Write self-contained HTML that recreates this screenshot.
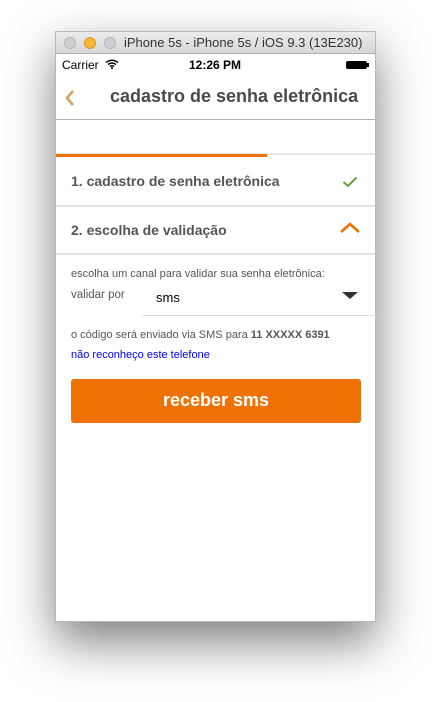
<!DOCTYPE html>
<html><head><meta charset="utf-8"><style>
*{margin:0;padding:0;box-sizing:border-box}
body{width:432px;height:702px;background:#fff;position:relative;font-family:"Liberation Sans",Arial,sans-serif;overflow:hidden}
.win{position:absolute;left:55px;top:31px;width:321px;height:591px;background:#fff;box-shadow:0 20px 45px rgba(0,0,0,.5);border:1px solid #b8b8b8}
.tb{position:absolute;left:0;top:0;width:100%;height:22px;background:linear-gradient(#ececec,#d6d6d6);border-bottom:1px solid #b0b0b0}
.dot{position:absolute;top:5px;width:12px;height:12px;border-radius:50%;background:#d0d0d0;border:1px solid #b5b5b5}
.t{position:absolute;white-space:nowrap}
.a{position:absolute}
</style></head><body>
<div class="win">
<div class="tb">
<div class="dot" style="left:8px"></div>
<div class="dot" style="left:28px;background:#f6b53a;border-color:#dc9a2a"></div>
<div class="dot" style="left:48px"></div>
<div class="t" style="left:68px;top:3px;font-size:13px;color:#333">iPhone 5s - iPhone 5s / iOS 9.3 (13E230)</div>
</div>
<div class="t" style="left:6px;top:26px;font-size:12px;color:#000">Carrier</div>
<svg class="a" style="left:49px;top:27px" width="14" height="10" viewBox="0 0 14 10"><path d="M1 3.5Q7 -1 13 3.5M3 5.5Q7 2.5 11 5.5M5 7.5Q7 6 9 7.5" stroke="#000" stroke-width="1.5" fill="none"/><circle cx="7" cy="9" r="1" fill="#000"/></svg>
<div class="t" style="left:133px;top:26px;font-size:12px;font-weight:bold;color:#000">12:26 PM</div>
<div class="a" style="left:290px;top:29px;width:21px;height:8px;background:#000;border-radius:2px"></div>
<div class="a" style="left:311px;top:31px;width:2px;height:4px;background:#000"></div>
<svg class="a" style="left:8px;top:57px" width="12" height="18" viewBox="0 0 12 18"><path d="M9 2L3 9L9 16" stroke="#d4a560" stroke-width="2.6" fill="none"/></svg>
<div class="t" style="left:54px;top:54px;font-size:18px;font-weight:bold;color:#4a4a4a">cadastro de senha eletrônica</div>
<div class="a" style="left:0;top:87px;width:100%;height:1px;background:#b0b0b0"></div>
<div class="a" style="left:0;top:121px;width:100%;height:2px;background:#e6e6e6"></div>
<div class="a" style="left:0;top:122px;width:211px;height:3px;background:#ee7203"></div>
<div class="t" style="left:15px;top:141px;font-size:14px;font-weight:bold;color:#555">1. cadastro de senha eletrônica</div>
<svg class="a" style="left:286px;top:144px" width="16" height="12" viewBox="0 0 16 12"><path d="M1.5 6L6 10L14.5 1.5" stroke="#6a9f3e" stroke-width="2" fill="none"/></svg>
<div class="a" style="left:0;top:173px;width:100%;height:2px;background:#e3e3e3"></div>
<div class="t" style="left:15px;top:190px;font-size:14px;font-weight:bold;color:#555">2. escolha de validação</div>
<svg class="a" style="left:283px;top:189px" width="22" height="14" viewBox="0 0 22 14"><path d="M2 11L11 3L20 11" stroke="#ee7203" stroke-width="2.6" fill="none"/></svg>
<div class="a" style="left:0;top:221px;width:100%;height:2px;background:#e3e3e3"></div>
<div class="t" style="left:15px;top:236px;font-size:11px;color:#555">escolha um canal para validar sua senha eletrônica:</div>
<div class="t" style="left:15px;top:257px;font-size:11.5px;color:#555">validar por</div>
<div class="t" style="left:100px;top:258px;font-size:13px;color:#000">sms</div>
<svg class="a" style="left:286px;top:260px" width="16" height="8" viewBox="0 0 16 8"><path d="M0 0H16L8 7Z" fill="#333"/></svg>
<div class="a" style="left:86px;top:283px;width:235px;height:1px;background:#ddd"></div>
<div class="t" style="left:15px;top:297px;font-size:11px;color:#555">o código será enviado via SMS para <b>11 XXXXX 6391</b></div>
<div class="t" style="left:15px;top:317px;font-size:11px;color:#0000ee">não reconheço este telefone</div>
<div class="a" style="left:15px;top:347px;width:290px;height:44px;background:#ee7203;border-radius:3px;color:#fff;font-size:18px;font-weight:bold;text-align:center;line-height:42px">receber sms</div>
</div>
</body></html>
